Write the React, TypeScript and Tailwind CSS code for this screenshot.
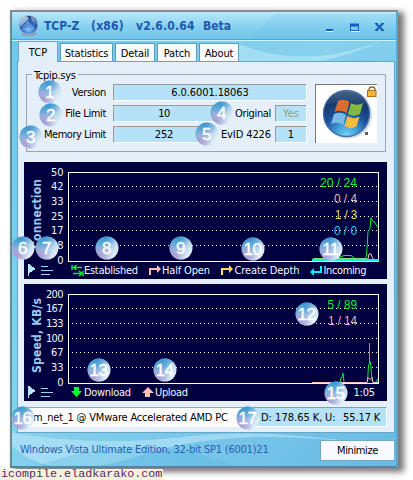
import React from 'react';

const ui = "font-['DejaVu_Sans_Condensed','Noto_Sans',sans-serif]";

function Badge({ n, x, y }: { n: number; x: number; y: number }) {
  return (
    <div
      className="absolute flex h-[23px] w-[23px] -translate-x-1/2 -translate-y-1/2 items-center justify-center rounded-full bg-[linear-gradient(125deg,#5fa9d8_12%,#a3cae6_50%,#eef5fb_88%)] font-['Liberation_Sans',sans-serif] text-[17px] leading-none tracking-[-0.5px] text-white"
      style={{ left: x, top: y }}
    >
      <span className="absolute inset-0 rounded-full bg-[radial-gradient(circle_at_15%_85%,#ac9bd2_0%,#b3a1d477_28%,transparent_48%)]" />
      <span className="absolute inset-0 rounded-full bg-[radial-gradient(circle_at_40%_5%,#3c97d0_0%,transparent_48%)]" />
      <span className="relative [-webkit-text-stroke:0.35px_white]">{n}</span>
    </div>
  );
}

const badges: [number, number, number][] = [
  [1, 49.5, 91.5], [2, 50.5, 114.5], [3, 30.5, 136.5], [4, 221.5, 112.5], [5, 206.5, 133.5],
  [6, 22.5, 247.5], [7, 46.5, 247.5], [8, 106.5, 247.5], [9, 180.5, 247.5], [10, 252.5, 248.5],
  [11, 330.5, 248.5], [12, 306.5, 313.5], [13, 98.5, 369.5], [14, 164.5, 369.5], [15, 335.5, 392.5],
  [16, 22.5, 417.5], [17, 247.5, 417.5],
];

function Field({ children, className = '' }: { children: React.ReactNode; className?: string }) {
  return (
    <div className={`flex h-[17px] items-center justify-center border-t border-l border-[#9a9a9a] border-r border-b border-r-white border-b-white bg-[#b6e2f9] text-[11px] leading-none ${className}`}>
      {children}
    </div>
  );
}

function Tab({ label, className }: { label: string; className: string }) {
  return (
    <div className={`flex h-[18px] items-center justify-center border border-b-0 border-[#5d9cb8] bg-[#f8fbfe] pt-px text-[11px] leading-none tracking-[-0.15px] ${className}`}>
      {label}
    </div>
  );
}

function Globe() {
  return (
    <svg width="21" height="22" viewBox="0 0 21 22">
      <defs>
        <radialGradient id="globe" cx=".5" cy=".75" r=".7">
          <stop offset="0" stopColor="#7fc0f4" />
          <stop offset=".5" stopColor="#2f6cc0" />
          <stop offset="1" stopColor="#1c3c7c" />
        </radialGradient>
        <linearGradient id="globeShine" x1="0" y1="0" x2="1" y2="1">
          <stop offset="0" stopColor="#f2f8ff" stopOpacity=".95" />
          <stop offset="1" stopColor="#a9c9ec" stopOpacity=".1" />
        </linearGradient>
      </defs>
      <ellipse cx="11" cy="18.5" rx="7.5" ry="2.8" fill="#8ba0b7" />
      <circle cx="10.5" cy="10" r="9.5" fill="url(#globe)" stroke="#a9bfd4" strokeWidth=".8" />
      <path d="M1.5 9Q2 3 8 1l3 2-3 4-3 2-2 3zM13 1.5q5 2 6.500 8l-3-1-3-3z" fill="url(#globeShine)" />
      <path d="M10 5v9M5 12l5-5 5 6M4 14h13" stroke="#b5daf8" strokeWidth=".6" fill="none" opacity=".8" />
    </svg>
  );
}

function WindowsOrb() {
  return (
    <svg width="61" height="58" viewBox="0 0 61 58">
      <defs>
        <radialGradient id="orb" cx=".5" cy=".98" r=".95">
          <stop offset="0" stopColor="#73d8f4" />
          <stop offset=".28" stopColor="#3f98d4" />
          <stop offset=".55" stopColor="#1b4d97" />
          <stop offset="1" stopColor="#14284f" />
        </radialGradient>
        <linearGradient id="gloss" x1="0" y1="0" x2="0" y2="1">
          <stop offset="0" stopColor="#6b91b8" />
          <stop offset="1" stopColor="#234570" />
        </linearGradient>
      </defs>
      <circle cx="32" cy="29.500" r="24" fill="#aebed2" opacity=".6" />
      <circle cx="30.500" cy="28.500" r="23" fill="url(#orb)" stroke="#426ca8" strokeWidth="1.3" />
      <path d="M10 20Q16 7 30 6t21 14Q30 13 10 20z" fill="url(#gloss)" opacity=".55" />
      <path d="M22 16q6-3 11.500 1l-3 11q-6-4-12-1z" fill="#df6c2d" />
      <path d="M35 18q6 3.500 12 0l-3 11q-6 3.500-12 0z" fill="#83b842" />
      <path d="M18 29q6-3 12 1l-3 10q-6-4-12-1z" fill="#7bbbe8" />
      <path d="M31.500 31q6 4 12 .5l-3 10q-6 3.500-12-.5z" fill="#f7bc39" />
      <rect x="49" y="47" width="3" height="3" fill="#555e65" />
      <path d="M53 6V4.500q0-2.500 3-2.500t3 2.500V6" fill="none" stroke="#8a6b27" strokeWidth="1.4" />
      <rect x="51.500" y="5.500" width="8.500" height="6" fill="#f1b43a" stroke="#aa711d" />
    </svg>
  );
}

function YAxis({ values }: { values: number[] }) {
  const ys = [14, 28, 43, 58, 72, 87, 102];
  return (
    <g fill="#eef5ff" fontSize="11" textAnchor="end">
      {values.map((v, i) => (
        <text key={v} x="39.5" y={ys[i]} textLength={v > 99 ? 17.5 : undefined}>{v}</text>
      ))}
    </g>
  );
}

function Grid() {
  return (
    <g shapeRendering="crispEdges">
      {[24, 39, 54, 68, 83].map((y) => (
        <line key={y} x1="48" x2="354" y1={y + 0.5} y2={y + 0.5} stroke="#fff" strokeDasharray="1 3" />
      ))}
      <rect x="44.5" y="10.5" width="310" height="88.5" fill="none" stroke="#fff" />
      <path d="M4.5 102v12" stroke="#b9e5f8" strokeWidth="1.5" />
      <path d="M5 102l7 5-7 4z" fill="#b9e5f8" />
      <path d="M17 104.5h7M17 108.5h12M17 112.5h9" stroke="#a5d4ef" />
    </g>
  );
}

function Chart({ children, values }: { children: React.ReactNode; values: number[] }) {
  return (
    <svg className={`block bg-[#00003f] ${ui}`} width="363" height="117" viewBox="0 0 363 117">
      <YAxis values={values} />
      <Grid />
      {children}
    </svg>
  );
}

function ConnectionChart() {
  return (
    <Chart values={[50, 42, 33, 25, 17, 8, 0]}>
      <text transform="translate(16.5 87) rotate(-90)" fill="#9bc9ee" fontSize="12" fontWeight="bold" textLength="70">Connection</text>
      <path d="M289 96.500h53l1-10 1-17 2-3 1-11 1 3 2 1 4 6M301 95.500h14l5-2h7l4 3" fill="none" stroke="#00ef32" />
      <path d="M290 97h54l1-5h2l1 3 2 3h5" fill="none" stroke="#ffc4b8" />
      <path d="M288 98h67" stroke="#00f2ff" strokeWidth="2" />
      <g fontFamily="Liberation Sans" fontSize="13.5" textAnchor="end" className="whitespace-pre">
        <text x="333" y="24.500" fill="#00ef32" textLength="37" lengthAdjust="spacingAndGlyphs">20 / 24</text>
        <text x="333" y="40.500" fill="#e9b5b8" textLength="23" lengthAdjust="spacingAndGlyphs">0 / 4</text>
        <text x="333" y="56.500" fill="#f5dc6c" textLength="22" lengthAdjust="spacingAndGlyphs">1 / 3</text>
        <text x="333" y="72.500" fill="#28ccef" textLength="23" lengthAdjust="spacingAndGlyphs">0 / 0</text>
      </g>
      <g fill="none" strokeWidth="2">
        <path d="M48 103v5M49 105.500h9M52.500 103l-3 2.500 3 2.500M59 109v5M49 111.500h9M55 109l3 2.500-3 2.500" stroke="#00ef32" strokeWidth="1.4" />
        <path d="M126 113v-6h8" stroke="#ffbdb8" />
        <path d="M198 113v-6h8" stroke="#ffdf58" />
        <path d="M297 104v6h-8" stroke="#00eff8" />
      </g>
      <path d="M133 103l4 4-4 4z" fill="#ffbdb8" />
      <path d="M205 103l4 4-4 4z" fill="#ffdf58" />
      <path d="M290 106l-4 4 4 4z" fill="#00eff8" />
      <g fill="#f3f6fc" fontSize="11">
        <text x="60" y="112" textLength="54">Established</text>
        <text x="138" y="112" textLength="48">Half Open</text>
        <text x="210.5" y="112" textLength="65">Create Depth</text>
        <text x="299.5" y="112" textLength="43">Incoming</text>
      </g>
    </Chart>
  );
}

function SpeedChart() {
  return (
    <Chart values={[200, 167, 133, 100, 67, 33, 0]}>
      <text transform="translate(16.5 89) rotate(-90)" fill="#9bc9ee" fontSize="12" fontWeight="bold" textLength="75">Speed, KB/s</text>
      <path d="M316 98l1-4 1-1 1-4 1 9M343.500 98l1-17 1-1V59v18l1 1 1 12 1 8M352 98l2-3" fill="none" stroke="#00ef32" />
      <path d="M288 98.500h55l1-5 2 2 2-2 1 5h5" fill="none" stroke="#ffb9b9" />
      <g fontFamily="Liberation Sans" fontSize="13.5" textAnchor="end">
        <text x="333" y="24.500" fill="#00ef32" textLength="29.5" lengthAdjust="spacingAndGlyphs">5 / 89</text>
        <text x="333" y="40.500" fill="#e9b5b8" textLength="29" lengthAdjust="spacingAndGlyphs">1 / 14</text>
      </g>
      <path d="M50 103h5v4h3l-5.5 6-5.5-6h3z" fill="#00ff32" />
      <path d="M121 113v-4h-3l6-6 6 6h-4v4z" fill="#ffbdb8" />
      <g fill="#f3f6fc" fontSize="11">
        <text x="60" y="112" textLength="47">Download</text>
        <text x="131" y="112" textLength="33">Upload</text>
        <text x="329.5" y="112" textLength="21.5">1:05</text>
      </g>
    </Chart>
  );
}

export default function App() {
  return (
    <div className={`relative h-[480px] w-[413px] overflow-hidden bg-white text-black ${ui}`}>
      <div className="h-full pt-[10px] pl-[10px]">
        <main className="relative flex h-[458px] w-[388px] flex-col border-2 border-t-[#858d90] border-r-[#59a6ce] border-b-[#4e879e] border-l-[#6d8998] bg-[linear-gradient(130deg,#70c3e9,#87d1ee_45%,#69bae4)] shadow-[5px_3px_6px_1px_#777]">
          <svg className="pointer-events-none absolute inset-0" width="384" height="454" viewBox="0 0 384 454">
            <path d="M222 30Q290 60 372 28Q300 62 225 50z" fill="#b9e7f7" opacity=".6" />
            <path d="M0 421Q90 435 170 425T365 433Q220 413 130 443T0 434z" fill="#c0eafa" opacity=".55" />
            <path d="M25 454Q130 416 222 454z" fill="#57b6e1" opacity=".3" />
          </svg>

          <header className="relative flex h-[28px] shrink-0 items-center border-b border-[#35b4e2] bg-[linear-gradient(#b8e9fa,#86d1ef_55%,#72c3e8)] pl-[6px] shadow-[0_1px_#cff3fd]">
            <svg className="absolute inset-0" width="384" height="27"><path d="M262 2L238 26H384V2z" fill="#6abde6" opacity=".22" /></svg>
            <div className="relative flex w-[26px]"><Globe /></div>
            <h1 className="relative flex text-[12px] leading-none font-bold text-[#1f59ad]">
              <span className="w-[47px]">TCP-Z</span>
              <span className="w-[45px] tracking-[0.2px]">(x86)</span>
              <span className="w-[67px] whitespace-nowrap tracking-[0.2px]">v2.6.0.64</span>
              <span>Beta</span>
            </h1>
            <svg className="absolute top-[9px] right-[11px]" width="60" height="14" viewBox="0 0 60 14" fill="none" stroke="#125fba">
              <path d="M1 9h7" strokeWidth="2" />
              <path d="M1 10.5h7M26 10.5h9" stroke="#e7fbff" />
              <rect x="25.5" y="3.5" width="8" height="6" /><path d="M25 4h9" strokeWidth="3" />
              <path d="M51 2.5l7 7M58 2.5l-7 7" strokeWidth="2" /><path d="M50 9.5h3M56 9.5h3M50 2.500h3M56 2.500h3" />
            </svg>
          </header>

          <nav className="relative flex h-[21px] shrink-0 items-end pl-[6px]">
            <div className="relative z-10 -mb-px flex h-[21px] w-[40px] items-center justify-center border border-b-0 border-[#69aac6] bg-[#e2eff9] text-[11px] leading-none">TCP</div>
            <div className="ml-[2px] flex gap-[2px]">
              <Tab label="Statistics" className="w-[53px]" />
              <Tab label="Detail" className="w-[40px]" />
              <Tab label="Patch" className="w-[40px]" />
              <Tab label="About" className="w-[40px]" />
            </div>
          </nav>

          <section className="relative ml-[5px] h-[372px] w-[378px] shrink-0 border border-[#65a6c5] bg-[#e5eff9] pt-[12px] pl-[6px]">
            <fieldset className="relative ml-[2px] flex h-[78px] w-[360px] border border-[#9da6aa] pt-[9px] pl-[7px]">
              <span className="absolute -top-[7px] left-[5px] bg-[#e5eff9] px-[2px] text-[11px] leading-[15px] tracking-[-0.3px]">Tcpip.sys</span>
              <div className="flex w-[273px] flex-col gap-[4px] text-[11px]">
                <div className="flex items-center"><span className="w-[72px] text-right leading-none tracking-[-0.3px]">Version</span><Field className="ml-[7px] w-[194px] tracking-[-0.1px]">6.0.6001.18063</Field></div>
                <div className="flex items-center">
                  <span className="w-[72px] text-right leading-none tracking-[-0.35px] whitespace-nowrap">File Limit</span><Field className="ml-[7px] w-[102px] tracking-[-0.5px]">10</Field>
                  <span className="w-[56px] text-right leading-none tracking-[-0.35px]">Original</span><Field className="ml-[4px] w-[32px] text-[#9c9d72]">Yes</Field>
                </div>
                <div className="flex items-center">
                  <span className="w-[72px] text-right leading-none tracking-[-0.5px] whitespace-nowrap">Memory Limit</span><Field className="ml-[7px] w-[102px] tracking-[-0.2px]">252</Field>
                  <span className="w-[56px] text-right leading-none tracking-[-0.1px] whitespace-nowrap">EvID 4226</span><Field className="ml-[4px] w-[32px]">1</Field>
                </div>
              </div>
              <div className="ml-[8px] flex h-[59px] w-[62px] items-start border-t border-l border-[#777] bg-white"><WindowsOrb /></div>
            </fieldset>
            <div className="mt-[10px] flex flex-col gap-[5px]"><ConnectionChart /><SpeedChart /></div>
            <div className="mt-[6px] ml-[-6px] flex h-[20px] w-[369px] text-[11px]">
              <div className="flex w-[230px] items-center border-t border-[#8bacc0] bg-white pl-[15px] leading-none whitespace-nowrap">
                <span className="tracking-[-0.2px]">m_net_1 @ VMware Accelerated AMD PC</span>
              </div>
              <div className="flex flex-1 items-center border border-[#879da9] border-r-white border-b-white bg-[#b6e2f9] pl-[12px] leading-none whitespace-pre">
                <span className="w-[64px]">D: 178.65 K,</span><span className="w-[18px]">U:</span><span className="tracking-[-0.1px]">55.17 K</span>
              </div>
            </div>
          </section>

          <footer className="relative flex flex-1 items-start pt-[3px] pl-[8px] text-[11px]">
            <span className="mt-[8px] w-[300px] leading-none tracking-[-0.23px] whitespace-nowrap text-[#265fb2]">Windows Vista Ultimate Edition, 32-bit SP1 (6001)21</span>
            <button className="mt-[4px] flex h-[21px] w-[75px] items-center justify-center border border-[#71a8c8] bg-[#f7faff] leading-none tracking-[-0.4px]">Minimize</button>
          </footer>
        </main>
      </div>
      {badges.map(([n, x, y]) => <Badge key={n} n={n} x={x} y={y} />)}
      <div className="absolute bottom-0 left-0 h-[11px] w-[163px] bg-[#f3f1dd] pl-px font-['Liberation_Mono',monospace] text-[11.7px] leading-[11px] text-[#512b68]">icompile.eladkarako.com</div>
    </div>
  );
}
